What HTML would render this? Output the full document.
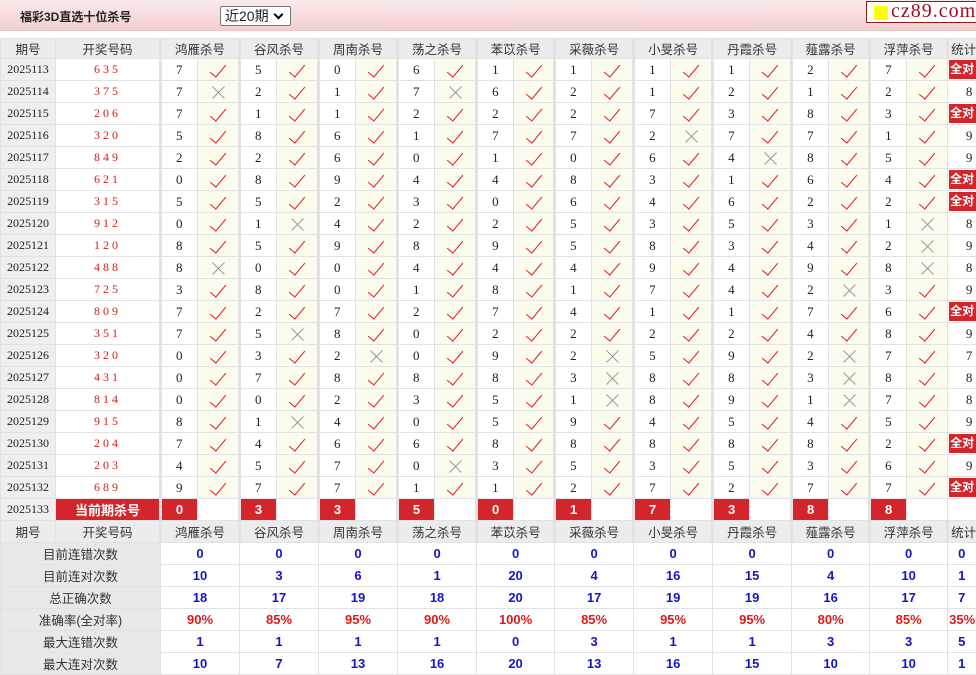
<!DOCTYPE html>
<html><head><meta charset="utf-8">
<style>
*{margin:0;padding:0;box-sizing:border-box}
body{width:976px;height:671px;overflow:hidden;background:#fff;font-family:"Liberation Serif","Noto Serif CJK SC",serif;font-size:13px;color:#222;position:relative}
.top{position:absolute;left:0;top:0;width:976px;height:31px;background:linear-gradient(#fbeaea,#f3cfd0);border-bottom:1px solid #e6c8c8}
.title{position:absolute;left:20px;top:8px;font:bold 12px "Liberation Sans","Noto Sans CJK SC",sans-serif;color:#222}
.sel{position:absolute;left:220px;top:6px;width:71px;height:20px;border:1px solid #777;background:#fff;font:14px "Liberation Sans","Noto Sans CJK SC",sans-serif;padding:0 0 0 4px;line-height:18px;border-radius:2px}
.sel:after{content:"";position:absolute;right:8px;top:4px;width:5px;height:5px;border-right:2px solid #000;border-bottom:2px solid #000;transform:rotate(45deg)}
.logo{position:absolute;left:866px;top:1px;width:112px;height:22px;border:1px solid #8b1a1a;background:#fff;font:20px "Liberation Serif",serif;color:#9b1020;line-height:19px;padding-left:24px;letter-spacing:1px}
.logo:before{content:"";position:absolute;left:7px;top:4px;width:14px;height:14px;background:#ffff00}
table{position:absolute;left:0;top:38px;border-collapse:collapse;table-layout:fixed;width:990px}
td{height:22px;border:1px solid #e2e2e2;text-align:center;padding:0;white-space:nowrap;overflow:hidden;font-size:13px}
tr.first td{height:20px}
.h td{background:#ececec;font-family:"Liberation Sans","Noto Sans CJK SC",sans-serif;font-size:12.5px;color:#333}
.q{background:#efefef;font-size:12px}
.k{color:#d42020;letter-spacing:3px;font-size:12px}
.n{text-align:left;padding-left:14px;border-left:3px solid #e2e2e2}
.y{background:#fcfcee}
.c:after{content:"";display:inline-block;width:7px;height:15px;border-right:1.5px solid #e8202a;border-bottom:1.5px solid #e8202a;transform:rotate(40deg);margin-top:-4px;vertical-align:middle}
.x{position:relative}
.x:before,.x:after{content:"";position:absolute;left:50%;top:50%;width:17px;height:1px;background:#999;margin-left:-8px}
.x:before{transform:rotate(45deg)}.x:after{transform:rotate(-45deg)}
.t{font-size:13px;padding:1px}
.t b{display:block;background:#d3262c;color:#fff;font:bold 12px "Liberation Sans","Noto Sans CJK SC",sans-serif;line-height:19px;text-align:left;padding-left:1px}
.r{background:#d3262c;color:#fff;font-weight:bold;font-family:"Liberation Sans","Noto Sans CJK SC",sans-serif;font-size:13px;border-left:3px solid #e2e2e2}
.rk{background:#d3262c;color:#fff;font-weight:bold;font-family:"Liberation Sans","Noto Sans CJK SC",sans-serif;font-size:13px}
.g{border-left:3px solid #e2e2e2}
.s td{font:bold 13px "Liberation Sans",sans-serif;color:#1414c8}
.s.p td{color:#e01818}
.s td.l,.s.p td.l{background:#e8e8e8;color:#333;font:12.5px "Liberation Sans","Noto Sans CJK SC",sans-serif}
</style></head><body>
<div class="top"><div class="title">福彩3D直选十位杀号</div><div class="sel">近20期</div></div>
<div class="logo">cz89.com</div>
<table>
<colgroup><col style="width:55px"><col style="width:105px">
<col style="width:37px"><col style="width:42px"><col style="width:37px"><col style="width:42px"><col style="width:37px"><col style="width:42px"><col style="width:37px"><col style="width:42px"><col style="width:37px"><col style="width:41px"><col style="width:37px"><col style="width:42px"><col style="width:37px"><col style="width:42px"><col style="width:37px"><col style="width:42px"><col style="width:37px"><col style="width:41px"><col style="width:37px"><col style="width:41px"><col style="width:43px"></colgroup>
<tr class="h first"><td>期号</td><td>开奖号码</td><td colspan="2" class="g">鸿雁杀号</td><td colspan="2" class="g">谷风杀号</td><td colspan="2" class="g">周南杀号</td><td colspan="2" class="g">荡之杀号</td><td colspan="2" class="g">苯苡杀号</td><td colspan="2" class="g">采薇杀号</td><td colspan="2" class="g">小旻杀号</td><td colspan="2" class="g">丹霞杀号</td><td colspan="2" class="g">薤露杀号</td><td colspan="2" class="g">浮萍杀号</td><td class="g" style="text-align:left;padding-left:2px">统计</td></tr>
<tr><td class="q">2025113</td><td class="k">635</td><td class="n">7</td><td class="y c"></td><td class="n">5</td><td class="y c"></td><td class="n">0</td><td class="y c"></td><td class="n">6</td><td class="y c"></td><td class="n">1</td><td class="y c"></td><td class="n">1</td><td class="y c"></td><td class="n">1</td><td class="y c"></td><td class="n">1</td><td class="y c"></td><td class="n">2</td><td class="y c"></td><td class="n">7</td><td class="y c"></td><td class="t"><b>全对</b></td></tr>
<tr><td class="q">2025114</td><td class="k">375</td><td class="n">7</td><td class="y x"></td><td class="n">2</td><td class="y c"></td><td class="n">1</td><td class="y c"></td><td class="n">7</td><td class="y x"></td><td class="n">6</td><td class="y c"></td><td class="n">2</td><td class="y c"></td><td class="n">1</td><td class="y c"></td><td class="n">2</td><td class="y c"></td><td class="n">1</td><td class="y c"></td><td class="n">2</td><td class="y c"></td><td class="t">8</td></tr>
<tr><td class="q">2025115</td><td class="k">206</td><td class="n">7</td><td class="y c"></td><td class="n">1</td><td class="y c"></td><td class="n">1</td><td class="y c"></td><td class="n">2</td><td class="y c"></td><td class="n">2</td><td class="y c"></td><td class="n">2</td><td class="y c"></td><td class="n">7</td><td class="y c"></td><td class="n">3</td><td class="y c"></td><td class="n">8</td><td class="y c"></td><td class="n">3</td><td class="y c"></td><td class="t"><b>全对</b></td></tr>
<tr><td class="q">2025116</td><td class="k">320</td><td class="n">5</td><td class="y c"></td><td class="n">8</td><td class="y c"></td><td class="n">6</td><td class="y c"></td><td class="n">1</td><td class="y c"></td><td class="n">7</td><td class="y c"></td><td class="n">7</td><td class="y c"></td><td class="n">2</td><td class="y x"></td><td class="n">7</td><td class="y c"></td><td class="n">7</td><td class="y c"></td><td class="n">1</td><td class="y c"></td><td class="t">9</td></tr>
<tr><td class="q">2025117</td><td class="k">849</td><td class="n">2</td><td class="y c"></td><td class="n">2</td><td class="y c"></td><td class="n">6</td><td class="y c"></td><td class="n">0</td><td class="y c"></td><td class="n">1</td><td class="y c"></td><td class="n">0</td><td class="y c"></td><td class="n">6</td><td class="y c"></td><td class="n">4</td><td class="y x"></td><td class="n">8</td><td class="y c"></td><td class="n">5</td><td class="y c"></td><td class="t">9</td></tr>
<tr><td class="q">2025118</td><td class="k">621</td><td class="n">0</td><td class="y c"></td><td class="n">8</td><td class="y c"></td><td class="n">9</td><td class="y c"></td><td class="n">4</td><td class="y c"></td><td class="n">4</td><td class="y c"></td><td class="n">8</td><td class="y c"></td><td class="n">3</td><td class="y c"></td><td class="n">1</td><td class="y c"></td><td class="n">6</td><td class="y c"></td><td class="n">4</td><td class="y c"></td><td class="t"><b>全对</b></td></tr>
<tr><td class="q">2025119</td><td class="k">315</td><td class="n">5</td><td class="y c"></td><td class="n">5</td><td class="y c"></td><td class="n">2</td><td class="y c"></td><td class="n">3</td><td class="y c"></td><td class="n">0</td><td class="y c"></td><td class="n">6</td><td class="y c"></td><td class="n">4</td><td class="y c"></td><td class="n">6</td><td class="y c"></td><td class="n">2</td><td class="y c"></td><td class="n">2</td><td class="y c"></td><td class="t"><b>全对</b></td></tr>
<tr><td class="q">2025120</td><td class="k">912</td><td class="n">0</td><td class="y c"></td><td class="n">1</td><td class="y x"></td><td class="n">4</td><td class="y c"></td><td class="n">2</td><td class="y c"></td><td class="n">2</td><td class="y c"></td><td class="n">5</td><td class="y c"></td><td class="n">3</td><td class="y c"></td><td class="n">5</td><td class="y c"></td><td class="n">3</td><td class="y c"></td><td class="n">1</td><td class="y x"></td><td class="t">8</td></tr>
<tr><td class="q">2025121</td><td class="k">120</td><td class="n">8</td><td class="y c"></td><td class="n">5</td><td class="y c"></td><td class="n">9</td><td class="y c"></td><td class="n">8</td><td class="y c"></td><td class="n">9</td><td class="y c"></td><td class="n">5</td><td class="y c"></td><td class="n">8</td><td class="y c"></td><td class="n">3</td><td class="y c"></td><td class="n">4</td><td class="y c"></td><td class="n">2</td><td class="y x"></td><td class="t">9</td></tr>
<tr><td class="q">2025122</td><td class="k">488</td><td class="n">8</td><td class="y x"></td><td class="n">0</td><td class="y c"></td><td class="n">0</td><td class="y c"></td><td class="n">4</td><td class="y c"></td><td class="n">4</td><td class="y c"></td><td class="n">4</td><td class="y c"></td><td class="n">9</td><td class="y c"></td><td class="n">4</td><td class="y c"></td><td class="n">9</td><td class="y c"></td><td class="n">8</td><td class="y x"></td><td class="t">8</td></tr>
<tr><td class="q">2025123</td><td class="k">725</td><td class="n">3</td><td class="y c"></td><td class="n">8</td><td class="y c"></td><td class="n">0</td><td class="y c"></td><td class="n">1</td><td class="y c"></td><td class="n">8</td><td class="y c"></td><td class="n">1</td><td class="y c"></td><td class="n">7</td><td class="y c"></td><td class="n">4</td><td class="y c"></td><td class="n">2</td><td class="y x"></td><td class="n">3</td><td class="y c"></td><td class="t">9</td></tr>
<tr><td class="q">2025124</td><td class="k">809</td><td class="n">7</td><td class="y c"></td><td class="n">2</td><td class="y c"></td><td class="n">7</td><td class="y c"></td><td class="n">2</td><td class="y c"></td><td class="n">7</td><td class="y c"></td><td class="n">4</td><td class="y c"></td><td class="n">1</td><td class="y c"></td><td class="n">1</td><td class="y c"></td><td class="n">7</td><td class="y c"></td><td class="n">6</td><td class="y c"></td><td class="t"><b>全对</b></td></tr>
<tr><td class="q">2025125</td><td class="k">351</td><td class="n">7</td><td class="y c"></td><td class="n">5</td><td class="y x"></td><td class="n">8</td><td class="y c"></td><td class="n">0</td><td class="y c"></td><td class="n">2</td><td class="y c"></td><td class="n">2</td><td class="y c"></td><td class="n">2</td><td class="y c"></td><td class="n">2</td><td class="y c"></td><td class="n">4</td><td class="y c"></td><td class="n">8</td><td class="y c"></td><td class="t">9</td></tr>
<tr><td class="q">2025126</td><td class="k">320</td><td class="n">0</td><td class="y c"></td><td class="n">3</td><td class="y c"></td><td class="n">2</td><td class="y x"></td><td class="n">0</td><td class="y c"></td><td class="n">9</td><td class="y c"></td><td class="n">2</td><td class="y x"></td><td class="n">5</td><td class="y c"></td><td class="n">9</td><td class="y c"></td><td class="n">2</td><td class="y x"></td><td class="n">7</td><td class="y c"></td><td class="t">7</td></tr>
<tr><td class="q">2025127</td><td class="k">431</td><td class="n">0</td><td class="y c"></td><td class="n">7</td><td class="y c"></td><td class="n">8</td><td class="y c"></td><td class="n">8</td><td class="y c"></td><td class="n">8</td><td class="y c"></td><td class="n">3</td><td class="y x"></td><td class="n">8</td><td class="y c"></td><td class="n">8</td><td class="y c"></td><td class="n">3</td><td class="y x"></td><td class="n">8</td><td class="y c"></td><td class="t">8</td></tr>
<tr><td class="q">2025128</td><td class="k">814</td><td class="n">0</td><td class="y c"></td><td class="n">0</td><td class="y c"></td><td class="n">2</td><td class="y c"></td><td class="n">3</td><td class="y c"></td><td class="n">5</td><td class="y c"></td><td class="n">1</td><td class="y x"></td><td class="n">8</td><td class="y c"></td><td class="n">9</td><td class="y c"></td><td class="n">1</td><td class="y x"></td><td class="n">7</td><td class="y c"></td><td class="t">8</td></tr>
<tr><td class="q">2025129</td><td class="k">915</td><td class="n">8</td><td class="y c"></td><td class="n">1</td><td class="y x"></td><td class="n">4</td><td class="y c"></td><td class="n">0</td><td class="y c"></td><td class="n">5</td><td class="y c"></td><td class="n">9</td><td class="y c"></td><td class="n">4</td><td class="y c"></td><td class="n">5</td><td class="y c"></td><td class="n">4</td><td class="y c"></td><td class="n">5</td><td class="y c"></td><td class="t">9</td></tr>
<tr><td class="q">2025130</td><td class="k">204</td><td class="n">7</td><td class="y c"></td><td class="n">4</td><td class="y c"></td><td class="n">6</td><td class="y c"></td><td class="n">6</td><td class="y c"></td><td class="n">8</td><td class="y c"></td><td class="n">8</td><td class="y c"></td><td class="n">8</td><td class="y c"></td><td class="n">8</td><td class="y c"></td><td class="n">8</td><td class="y c"></td><td class="n">2</td><td class="y c"></td><td class="t"><b>全对</b></td></tr>
<tr><td class="q">2025131</td><td class="k">203</td><td class="n">4</td><td class="y c"></td><td class="n">5</td><td class="y c"></td><td class="n">7</td><td class="y c"></td><td class="n">0</td><td class="y x"></td><td class="n">3</td><td class="y c"></td><td class="n">5</td><td class="y c"></td><td class="n">3</td><td class="y c"></td><td class="n">5</td><td class="y c"></td><td class="n">3</td><td class="y c"></td><td class="n">6</td><td class="y c"></td><td class="t">9</td></tr>
<tr><td class="q">2025132</td><td class="k">689</td><td class="n">9</td><td class="y c"></td><td class="n">7</td><td class="y c"></td><td class="n">7</td><td class="y c"></td><td class="n">1</td><td class="y c"></td><td class="n">1</td><td class="y c"></td><td class="n">2</td><td class="y c"></td><td class="n">7</td><td class="y c"></td><td class="n">2</td><td class="y c"></td><td class="n">7</td><td class="y c"></td><td class="n">7</td><td class="y c"></td><td class="t"><b>全对</b></td></tr>
<tr><td class="q">2025133</td><td class="rk">当前期杀号</td><td class="r">0</td><td></td><td class="r">3</td><td></td><td class="r">3</td><td></td><td class="r">5</td><td></td><td class="r">0</td><td></td><td class="r">1</td><td></td><td class="r">7</td><td></td><td class="r">3</td><td></td><td class="r">8</td><td></td><td class="r">8</td><td></td><td></td></tr>
<tr class="h"><td>期号</td><td>开奖号码</td><td colspan="2" class="g">鸿雁杀号</td><td colspan="2" class="g">谷风杀号</td><td colspan="2" class="g">周南杀号</td><td colspan="2" class="g">荡之杀号</td><td colspan="2" class="g">苯苡杀号</td><td colspan="2" class="g">采薇杀号</td><td colspan="2" class="g">小旻杀号</td><td colspan="2" class="g">丹霞杀号</td><td colspan="2" class="g">薤露杀号</td><td colspan="2" class="g">浮萍杀号</td><td class="g" style="text-align:left;padding-left:2px">统计</td></tr>
<tr class="s"><td colspan="2" class="l">目前连错次数</td><td colspan="2">0</td><td colspan="2">0</td><td colspan="2">0</td><td colspan="2">0</td><td colspan="2">0</td><td colspan="2">0</td><td colspan="2">0</td><td colspan="2">0</td><td colspan="2">0</td><td colspan="2">0</td><td style="text-align:left;padding-left:10px">0</td></tr>
<tr class="s"><td colspan="2" class="l">目前连对次数</td><td colspan="2">10</td><td colspan="2">3</td><td colspan="2">6</td><td colspan="2">1</td><td colspan="2">20</td><td colspan="2">4</td><td colspan="2">16</td><td colspan="2">15</td><td colspan="2">4</td><td colspan="2">10</td><td style="text-align:left;padding-left:10px">1</td></tr>
<tr class="s"><td colspan="2" class="l">总正确次数</td><td colspan="2">18</td><td colspan="2">17</td><td colspan="2">19</td><td colspan="2">18</td><td colspan="2">20</td><td colspan="2">17</td><td colspan="2">19</td><td colspan="2">19</td><td colspan="2">16</td><td colspan="2">17</td><td style="text-align:left;padding-left:10px">7</td></tr>
<tr class="s p"><td colspan="2" class="l">准确率(全对率)</td><td colspan="2">90%</td><td colspan="2">85%</td><td colspan="2">95%</td><td colspan="2">90%</td><td colspan="2">100%</td><td colspan="2">85%</td><td colspan="2">95%</td><td colspan="2">95%</td><td colspan="2">80%</td><td colspan="2">85%</td><td style="text-align:left;padding-left:1px">35%</td></tr>
<tr class="s"><td colspan="2" class="l">最大连错次数</td><td colspan="2">1</td><td colspan="2">1</td><td colspan="2">1</td><td colspan="2">1</td><td colspan="2">0</td><td colspan="2">3</td><td colspan="2">1</td><td colspan="2">1</td><td colspan="2">3</td><td colspan="2">3</td><td style="text-align:left;padding-left:10px">5</td></tr>
<tr class="s"><td colspan="2" class="l">最大连对次数</td><td colspan="2">10</td><td colspan="2">7</td><td colspan="2">13</td><td colspan="2">16</td><td colspan="2">20</td><td colspan="2">13</td><td colspan="2">16</td><td colspan="2">15</td><td colspan="2">10</td><td colspan="2">10</td><td style="text-align:left;padding-left:10px">1</td></tr>
</table>
</body></html>
